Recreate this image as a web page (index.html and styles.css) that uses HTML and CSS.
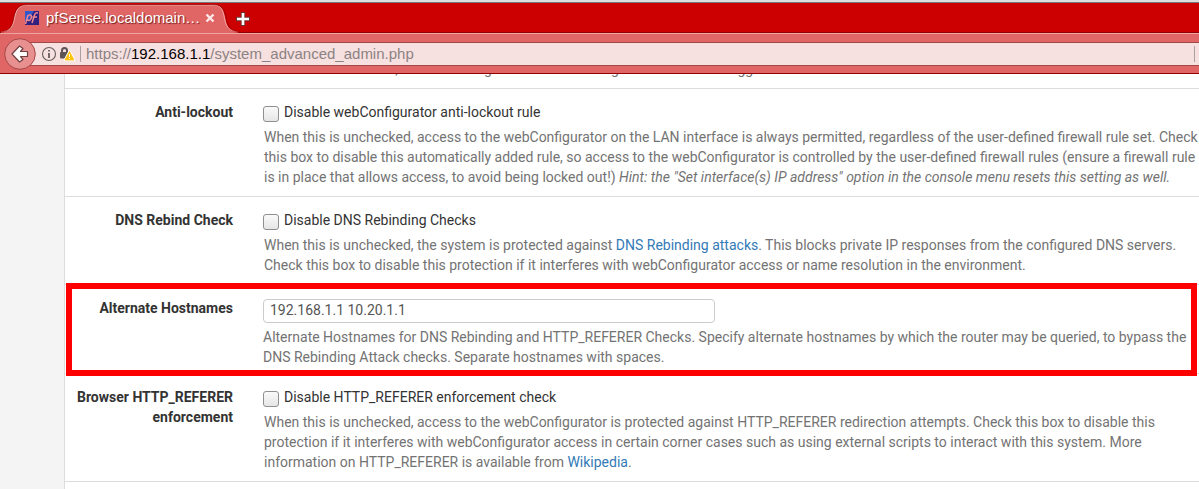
FILE: index.html
```html
<!DOCTYPE html>
<html lang="en">
<head>
<meta charset="utf-8">
<title>pfSense.localdomain - System: Advanced: Admin Access</title>
<link rel="stylesheet" href="styles.css">
</head>
<body>
<header class="browser">
  <div class="tabs">
    <div class="tab">
      <svg class="tab-shape" width="240" height="29" viewBox="0 0 240 29" aria-hidden="true">
        <path d="M0 29C8 28 11 25 13 18C15 7 17 1 28 1H213C222 1 224 7 226 18C228 25 231 28 239 29Z" fill="#e06666"/>
        <path d="M1 28C9 27 12 24 14 17C16 6 18 1 28 1H213C222 1 223 6 225 17C227 24 230 27 238 28" fill="none" stroke="#f0a3a3"/>
        <path d="M0 28C8 27 11 24 13 17C15 5 17 0.500 28 0.500H213C223 0.500 225 6 227 17C229 24 232 27 239 28" fill="none" stroke="#930000" stroke-width=".7"/>
      </svg>
      <svg class="favicon" width="16" height="16" viewBox="0 0 16 16" aria-hidden="true">
        <path d="M1 1H15V15H1Z" fill="#302080"/><path d="M1 1H10L4 11H1Z" fill="#3158c8"/>
        <g fill="none" stroke="#ed8790" stroke-width="1.500"><path d="M1.500 14L4 5M3.500 6.500C6 3.500 8.500 5 7 8.500C6 11 4 11 3 9.500"/><path d="M8 13L10.500 5C11 3 12 2.500 14 3M8.500 7H13"/></g>
      </svg>
      <span class="tab-title">pfSense.localdomain…</span>
      <button class="tab-close" aria-label="Close tab"><svg width="10" height="10" viewBox="0 0 10 10"><path d="M1.500 1.500L8.500 8.500M8.500 1.500L1.500 8.500" stroke="#fbe8e8" stroke-width="2.400"/></svg></button>
    </div>
    <button class="new-tab" aria-label="New tab"><svg width="16" height="16" viewBox="0 0 16 16"><path d="M8 1V15M1 8H15" stroke="#6f3535" stroke-width="4.500"/><path d="M8 2V14M2 8H14" stroke="#fff" stroke-width="2.600"/></svg></button>
  </div>
  <div class="toolbar">
    <button class="back" aria-label="Back"><svg width="32" height="32" viewBox="0 0 32 32"><circle cx="16" cy="16" r="15.300" fill="#e88f8f" stroke="#a44747"/><path d="M8 16L15.500 8L19 10.500L16.500 13.500H23.500V18.500H16.500L19 21.500L15.500 24Z" fill="#fff" stroke="#704141" stroke-width="1.200" stroke-linejoin="round"/></svg></button>
    <div class="address">
      <svg width="16" height="16" viewBox="0 0 16 16" aria-hidden="true"><circle cx="8" cy="8" r="6.500" fill="none" stroke="#655d5d" stroke-width="1.100"/><path d="M8 7V12M8 4V5.600" stroke="#655d5d" stroke-width="1.800"/></svg>
      <svg class="lock" width="16" height="16" viewBox="0 0 16 16" aria-hidden="true"><path d="M3 7V4.500A2.500 2.500 0 0 1 8 4.500V7" fill="none" stroke="#5d5555" stroke-width="2"/><rect x="1" y="6" width="9" height="6.500" rx="1" fill="#5d5555"/><path d="M10.500 5.500L15 14H6Z" fill="#ffc20d" stroke="#fff" stroke-width="2.600" stroke-linejoin="round"/><path d="M10.500 5.500L15 14H6Z" fill="#ffc20d" stroke="#ffc20d" stroke-width=".8" stroke-linejoin="round"/><path d="M10.500 8V11M10.500 12V13" stroke="#fff"/></svg>
      <span class="divider"></span>
      <span class="url">https://<b>192.168.1.1</b>/system_advanced_admin.php</span>
      <span class="divider end"></span>
    </div>
  </div>
</header>
<main class="viewport">
  <form class="panel">
    <section class="row scrolled">
      <div></div>
      <div class="field"><p class="help">When this is checked, successful logins to the webConfigurator will not be logged.</p></div>
    </section>
    <section class="row">
      <label class="name" for="lockout">Anti-lockout</label>
      <div class="field">
        <label class="check"><input type="checkbox" id="lockout">Disable webConfigurator anti-lockout rule</label>
        <p class="help">When this is unchecked, access to the webConfigurator on the LAN interface is always permitted, regardless of the user-defined firewall rule set. Check this box to disable this automatically added rule, so access to the webConfigurator is controlled by the user-defined firewall rules (ensure a firewall rule is in place that allows access, to avoid being locked out!) <i>Hint: the "Set interface(s) IP address" option in the console menu resets this setting as well.</i></p>
      </div>
    </section>
    <section class="row">
      <label class="name" for="rebind">DNS Rebind Check</label>
      <div class="field">
        <label class="check"><input type="checkbox" id="rebind">Disable DNS Rebinding Checks</label>
        <p class="help">When this is unchecked, the system is protected against <a href="#rebinding">DNS Rebinding attacks</a>. This blocks private IP responses from the configured DNS servers. Check this box to disable this protection if it interferes with webConfigurator access or name resolution in the environment.</p>
      </div>
    </section>
    <section class="row highlighted">
      <label class="name" for="hostnames">Alternate Hostnames</label>
      <div class="field">
        <input class="textbox" type="text" id="hostnames" value="192.168.1.1 10.20.1.1">
        <p class="help">Alternate Hostnames for DNS Rebinding and HTTP_REFERER Checks. Specify alternate hostnames by which the router may be queried, to bypass the DNS Rebinding Attack checks. Separate hostnames with spaces.</p>
      </div>
    </section>
    <section class="row">
      <label class="name" for="referer">Browser HTTP_REFERER enforcement</label>
      <div class="field">
        <label class="check"><input type="checkbox" id="referer">Disable HTTP_REFERER enforcement check</label>
        <p class="help">When this is unchecked, access to the webConfigurator is protected against HTTP_REFERER redirection attempts. Check this box to disable this protection if it interferes with webConfigurator access in certain corner cases such as using external scripts to interact with this system. More information on HTTP_REFERER is available from <a href="#wikipedia">Wikipedia</a>.</p>
      </div>
    </section>
  </form>
</main>
</body>
</html>
```
FILE: styles.css
```css
* { box-sizing: border-box; }
body {
  margin: 0;
  height: 100vh;
  display: flex;
  flex-direction: column;
  overflow: hidden;
  background: #f4f4f4;
  color: #333;
  font: 14px/20px Roboto, sans-serif;
}
button { padding: 0; border: 0; background: none; }
svg { display: block; }

.browser { flex: none; font-family: "Liberation Sans", sans-serif; }
.tabs {
  display: flex;
  align-items: flex-end;
  height: 33px;
  border-top: 2px solid #dedede;
  border-bottom: 1px solid #930000;
  background: #c00;
  box-shadow: inset 0 1px #777;
}
.tab {
  position: relative;
  display: flex;
  align-items: center;
  width: 240px;
  height: 28px;
  padding-left: 24px;
  color: #fff;
}
.tab-shape { position: absolute; left: 0; top: 0; }
.favicon, .tab-title, .tab-close { position: relative; }
.tab-title { margin-left: 6px; width: 152px; font-size: 15px; text-shadow: 1px 1px 1px #702020; white-space: nowrap; }
.tab-close { margin-left: 7px; }
.new-tab { margin: 0 0 5px -5px; position: relative; }
.toolbar {
  display: flex;
  align-items: center;
  height: 41px;
  padding-left: 4px;
  background: #e06666;
  border-top: 1px solid #f0a3a3;
  border-bottom: 1px solid #930000;
}
.back { position: relative; z-index: 1; }
.address {
  flex: 1;
  display: flex;
  align-items: center;
  height: 24px;
  margin-left: -6px;
  padding-left: 11px;
  background: #f7e0e0;
  border: solid #a44747;
  border-width: 1px 0;
  font-size: 15px;
  color: #8b8383;
}
.lock { margin-left: 2px; }
.divider { width: 1px; height: 16px; margin: 0 5px; background: #aaa0a0; }
.divider.end { margin: 0 4px 0 auto; }
.url b { font-weight: 400; color: #000; }

.viewport { flex: 1; min-height: 0; overflow: hidden; padding-left: 64px; }
.panel { display: flow-root; background: #fff; border-left: 1px solid #ddd; min-height: 100%; }
.row {
  position: relative;
  display: grid;
  grid-template-columns: 168px 1fr;
  column-gap: 30px;
  padding: 13px 0 9px;
  border-bottom: 1px solid #ddd;
}
.name { font-weight: 700; text-align: right; }
.check { display: flex; align-items: center; height: 20px; }
.help { margin: 5px 0 0 1px; color: #737373; }
.help a { color: #337ab7; text-decoration: none; }
.check input {
  appearance: none;
  width: 16px;
  height: 16px;
  margin: 3px 5px 0 0;
  border: 1px solid #8f8f8f;
  border-radius: 3px;
  background: linear-gradient(#fafafa, #e6e6e6);
}
.textbox {
  display: block;
  width: 452px;
  max-width: 100%;
  height: 24px;
  margin-top: 1px;
  padding: 0 6px 2px;
  border: 1px solid #ccc;
  border-radius: 4px;
  background: #fff;
  color: #555;
  font: inherit;
}
.highlighted { padding-bottom: 6px; }
.highlighted .help { margin: 4px 0 0; }
.highlighted::after {
  content: "";
  position: absolute;
  inset: -2px 2px -3px 1px;
  border: 6px solid #f00;
  pointer-events: none;
  z-index: 1;
}
.scrolled { margin-top: -33px; }
```
